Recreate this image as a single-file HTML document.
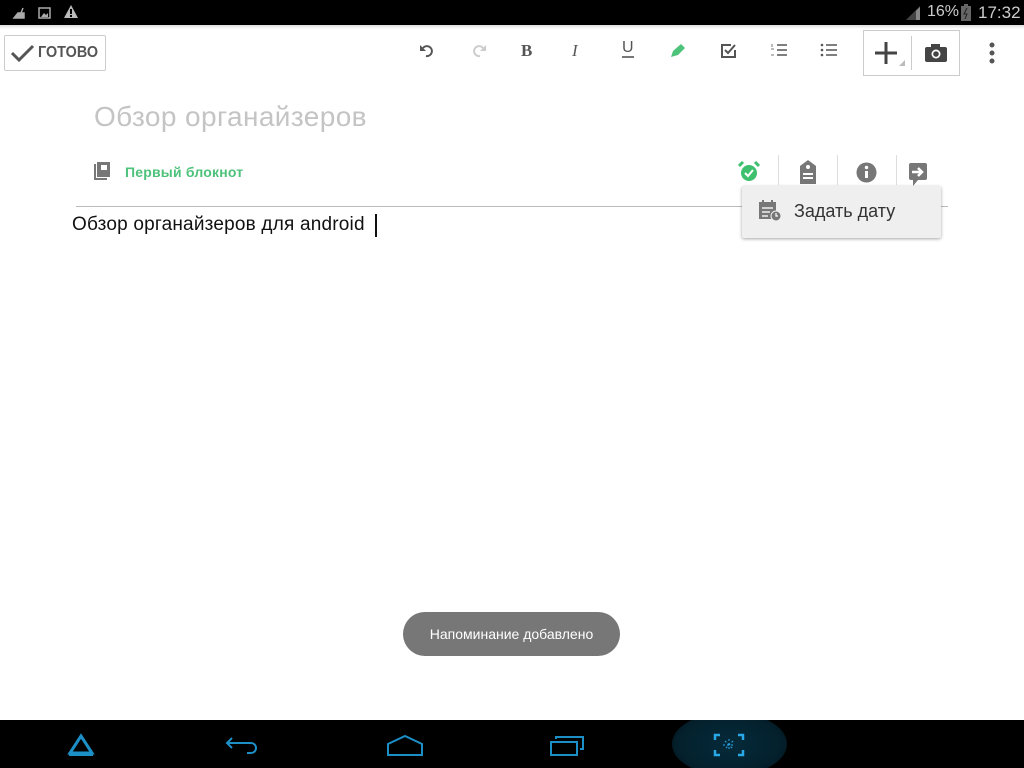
<!DOCTYPE html>
<html><head><meta charset="utf-8"><style>
*{margin:0;padding:0;box-sizing:border-box}
html,body{width:1024px;height:768px;overflow:hidden}
body{position:relative;background:#fff;font-family:"Liberation Sans","Noto Sans CJK SC",sans-serif}
.a{position:absolute}
svg{position:absolute}
</style></head><body>
<div class="a" style="left:0;top:0;width:1024px;height:25px;background:#000"></div>
<div class="a" style="left:0;top:25px;width:1024px;height:4px;background:linear-gradient(#ddd,#fff)"></div>
<svg style="left:12px;top:6px" width="14" height="14"><path d="M2 12 L6 7 L12 7 L12 12 Z M9 7 L11 2" fill="#aaa" stroke="#aaa" stroke-width="1.5"/></svg>
<svg style="left:38px;top:6px" width="14" height="14"><rect x="1" y="2" width="11" height="10" fill="none" stroke="#aaa" stroke-width="1.5"/><path d="M3 11 L6 7 L8 9 L10 7 L10 11Z" fill="#aaa"/></svg>
<svg style="left:63px;top:4px" width="16" height="16"><path d="M8 1 L15 14 L1 14Z" fill="#bbb"/><rect x="7" y="5" width="2" height="5" fill="#000"/><rect x="7" y="11" width="2" height="2" fill="#000"/></svg>
<svg style="left:904px;top:5px" width="20" height="16"><path d="M2 15 L16 15 L16 1Z" fill="#444"/><path d="M12 15 L12 6 L16 2 L16 15Z" fill="#888"/></svg>
<div class="a" style="left:927px;top:3px;color:#ccc;font-size:16px">16%</div>
<svg style="left:961px;top:4px" width="10" height="17"><rect x="0" y="2" width="10" height="15" fill="#666"/><rect x="3" y="0" width="4" height="2" fill="#666"/><path d="M6 4 L3 10 L6 10 L4 15" stroke="#222" fill="none"/></svg>
<div class="a" style="left:978px;top:3px;color:#ccc;font-size:17px">17:32</div>
<div class="a" style="left:4px;top:35px;width:102px;height:36px;border:1px solid #ccc;border-radius:2px"></div>
<svg style="left:10px;top:43px" width="26" height="20"><path d="M2 10 L9 17 L23 3" stroke="#555" stroke-width="3" fill="none"/></svg>
<div class="a" style="left:38px;top:44px;font-size:16px;font-weight:bold;color:#555;transform:scaleX(0.9);transform-origin:left">ГОТОВО</div>
<svg style="left:418px;top:42px" width="20" height="18"><path d="M5 6 A5 5 0 1 1 8 14" stroke="#555" stroke-width="2" fill="none"/><path d="M2 3 L2 9 L8 9Z" fill="#555"/></svg>
<svg style="left:468px;top:42px" width="20" height="18"><path d="M15 6 A5 5 0 1 0 12 14" stroke="#ccc" stroke-width="2" fill="none"/><path d="M18 3 L18 9 L12 9Z" fill="#ccc"/></svg>
<div class="a" style="left:521px;top:41px;font-size:17px;font-weight:bold;color:#555;font-family:'Liberation Serif',serif">B</div>
<div class="a" style="left:572px;top:41px;font-size:17px;font-style:italic;color:#555;font-family:'Liberation Serif',serif">I</div>
<div class="a" style="left:622px;top:39px;font-size:16px;color:#555;border-bottom:2px solid #777;line-height:17px">U</div>
<svg style="left:668px;top:42px" width="22" height="18"><path d="M3 15 L5 9 L13 2 L17 6 L10 13 Z" fill="#4cc27a"/></svg>
<svg style="left:720px;top:42px" width="18" height="18"><path d="M15 8 V15 H2 V3 H11" stroke="#555" stroke-width="2" fill="none"/><path d="M5 8 L8 11 L15 3" stroke="#555" stroke-width="2" fill="none"/></svg>
<svg style="left:770px;top:42px" width="18" height="16"><path d="M7 3H17M7 8H17M7 13H17" stroke="#555" stroke-width="1.5"/><path d="M2 2V5M1 7H4M1 13H4" stroke="#777" stroke-width="1"/></svg>
<svg style="left:820px;top:42px" width="18" height="16"><path d="M6 3H17M6 8H17M6 13H17" stroke="#555" stroke-width="1.5"/><circle cx="2" cy="3" r="1.3" fill="#555"/><circle cx="2" cy="8" r="1.3" fill="#555"/><circle cx="2" cy="13" r="1.3" fill="#555"/></svg>
<div class="a" style="left:863px;top:30px;width:97px;height:46px;border:1px solid #ccc"></div>
<div class="a" style="left:911px;top:36px;width:1px;height:34px;background:#ccc"></div>
<svg style="left:872px;top:40px" width="36" height="28"><path d="M14 2V24M3 13H25" stroke="#444" stroke-width="3"/><path d="M33 20 L33 26 L27 26Z" fill="#bbb"/></svg>
<svg style="left:924px;top:43px" width="24" height="20"><rect x="1" y="4" width="22" height="15" rx="2" fill="#444"/><rect x="7" y="1" width="9" height="4" fill="#444"/><circle cx="12" cy="11" r="4.5" fill="#fff"/><circle cx="12" cy="11" r="2.8" fill="#444"/></svg>
<svg style="left:988px;top:42px" width="8" height="24"><circle cx="4" cy="3" r="2.5" fill="#555"/><circle cx="4" cy="11" r="2.5" fill="#555"/><circle cx="4" cy="19" r="2.5" fill="#555"/></svg>
<div class="a" style="left:94px;top:101px;font-size:28px;color:#c4c4c4;letter-spacing:0.4px">Обзор органайзеров</div>
<svg style="left:93px;top:162px" width="18" height="20"><path d="M2 2 V17 H14" stroke="#777" stroke-width="2" fill="none"/><rect x="4" y="0" width="13" height="15" fill="#777"/><rect x="8" y="3" width="6" height="5" fill="#fff"/></svg>
<div class="a" style="left:125px;top:164px;font-size:14px;font-weight:bold;color:#4cc27a;letter-spacing:0.2px">Первый блокнот</div>
<svg style="left:738px;top:161px" width="22" height="22"><circle cx="11" cy="12" r="8" fill="#3ec06e"/><path d="M1 5 L5 1 M21 5 L17 1" stroke="#3ec06e" stroke-width="3"/><path d="M7 12 L10 15 L15 9" stroke="#fff" stroke-width="2" fill="none"/></svg>
<div class="a" style="left:778px;top:155px;width:1px;height:30px;background:#ddd"></div>
<div class="a" style="left:837px;top:155px;width:1px;height:30px;background:#ddd"></div>
<div class="a" style="left:896px;top:155px;width:1px;height:30px;background:#ddd"></div>
<svg style="left:798px;top:159px" width="20" height="26"><path d="M10 1 L18 7 V25 H2 V7Z" fill="#777"/><circle cx="10" cy="8" r="2" fill="#fff"/><path d="M5 15H15M5 19H15" stroke="#fff" stroke-width="2"/></svg>
<svg style="left:856px;top:162px" width="21" height="21"><circle cx="10.5" cy="10.5" r="10" fill="#777"/><rect x="9" y="9" width="3" height="7" fill="#fff"/><circle cx="10.5" cy="5.5" r="1.7" fill="#fff"/></svg>
<svg style="left:907px;top:162px" width="22" height="26"><rect x="2" y="1" width="18" height="17" rx="2" fill="#777"/><path d="M6 18 L6 24 L11 18Z" fill="#777"/><path d="M5 10H14M11 6L15 10L11 14" stroke="#fff" stroke-width="2.5" fill="none"/></svg>
<div class="a" style="left:76px;top:206px;width:872px;height:1px;background:#bbb"></div>
<div class="a" style="left:72px;top:214px;font-size:19px;color:#111;letter-spacing:0.2px">Обзор органайзеров для android</div>
<div class="a" style="left:375px;top:214px;width:2px;height:23px;background:#111"></div>
<div class="a" style="left:742px;top:186px;width:199px;height:52px;background:#efefef;border-radius:2px;box-shadow:0 1px 3px rgba(0,0,0,.35)"></div>
<svg style="left:758px;top:200px" width="24" height="22"><rect x="1" y="2" width="17" height="17" fill="#777"/><path d="M5 0V4M14 0V4" stroke="#777" stroke-width="2"/><path d="M4 8H15M4 12H12M4 16H10" stroke="#efefef" stroke-width="1.5"/><circle cx="18" cy="16" r="5" fill="#777" stroke="#efefef" stroke-width="1"/><path d="M18 13V16H20" stroke="#fff" stroke-width="1.2" fill="none"/></svg>
<div class="a" style="left:794px;top:201px;font-size:18px;color:#333">Задать дату</div>
<div class="a" style="left:403px;top:612px;width:217px;height:44px;background:#777;border-radius:22px;color:#fff;font-size:14px;text-align:center;line-height:44px">Напоминание добавлено</div>
<div class="a" style="left:0;top:720px;width:1024px;height:48px;background:#000;overflow:hidden">
<div class="a" style="left:672px;top:-8px;width:115px;height:64px;background:radial-gradient(ellipse at center,#052a3a 0%,#04202c 65%,#000 100%);border-radius:50%"></div>
</div>
<svg style="left:66px;top:733px" width="30" height="24"><path d="M15 3 L26 20 H4Z" stroke="#1d8fc7" stroke-width="3" fill="none"/><rect x="3" y="19" width="24" height="4" fill="#1d8fc7"/></svg>
<svg style="left:225px;top:736px" width="36" height="20"><path d="M7 2 L2 7 L7 12 M2 7 H26 A5 5 0 0 1 26 17 H22" stroke="#1d8fc7" stroke-width="2" fill="none"/></svg>
<svg style="left:386px;top:734px" width="38" height="22"><path d="M2 21 V10 L19 2 L36 10 V21Z" stroke="#1d8fc7" stroke-width="2" fill="none"/></svg>
<svg style="left:549px;top:735px" width="36" height="22"><rect x="2" y="7" width="26" height="13" stroke="#1d8fc7" stroke-width="2" fill="none"/><path d="M7 4 V2 H34 V14 H31" stroke="#1d8fc7" stroke-width="2" fill="none"/></svg>
<svg style="left:713px;top:733px" width="32" height="24"><path d="M2 7 V2 H7 M25 2 H30 V7 M30 17 V22 H25 M7 22 H2 V17" stroke="#29a8e8" stroke-width="2.5" fill="none"/><path d="M16 6V18M10 12H22M12 8L20 16M20 8L12 16" stroke="#29a8e8" stroke-width="1" stroke-dasharray="2 2"/></svg>
</body></html>
